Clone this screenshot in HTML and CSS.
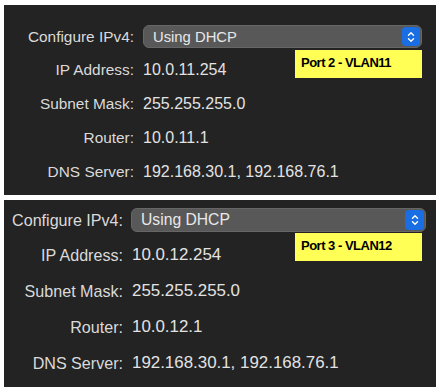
FILE: index.html
```html
<!DOCTYPE html>
<html lang="en">
  <head>
    <meta charset="UTF-8" />
    <meta name="viewport" content="width=device-width, initial-scale=1.0" />
    <title>TCP/IP settings</title>
    <link rel="stylesheet" href="styles.css">
  </head>
  <body>
    <div class="panel panel-a">
      <div class="row row-config">
        <span class="label">Configure IPv4:</span>
        <div class="popup">
          <span class="popup-text">Using DHCP</span>
          <span class="stepper">
            <svg width="8" height="12" viewBox="0 0 8 12">
              <path d="M1.5 4.2 L4 1.8 L6.5 4.2 M1.5 7.8 L4 10.2 L6.5 7.8" fill="none" stroke="#fff" stroke-width="1.4" stroke-linecap="round" stroke-linejoin="round"/>
            </svg>
          </span>
        </div>
      </div>
      <div class="row"><span class="label">IP Address:</span><span class="value">10.0.11.254</span></div>
      <div class="row"><span class="label">Subnet Mask:</span><span class="value">255.255.255.0</span></div>
      <div class="row"><span class="label">Router:</span><span class="value">10.0.11.1</span></div>
      <div class="row"><span class="label">DNS Server:</span><span class="value">192.168.30.1, 192.168.76.1</span></div>
      <div class="note">Port 2 - VLAN11</div>
    </div>

    <div class="panel panel-b">
      <div class="row row-config">
        <span class="label">Configure IPv4:</span>
        <div class="popup">
          <span class="popup-text">Using DHCP</span>
          <span class="stepper">
            <svg width="8" height="12" viewBox="0 0 8 12">
              <path d="M1.5 4.2 L4 1.8 L6.5 4.2 M1.5 7.8 L4 10.2 L6.5 7.8" fill="none" stroke="#fff" stroke-width="1.4" stroke-linecap="round" stroke-linejoin="round"/>
            </svg>
          </span>
        </div>
      </div>
      <div class="row"><span class="label">IP Address:</span><span class="value">10.0.12.254</span></div>
      <div class="row"><span class="label">Subnet Mask:</span><span class="value">255.255.255.0</span></div>
      <div class="row"><span class="label">Router:</span><span class="value">10.0.12.1</span></div>
      <div class="row"><span class="label">DNS Server:</span><span class="value">192.168.30.1, 192.168.76.1</span></div>
      <div class="note">Port 3 - VLAN12</div>
    </div>
  </body>
</html>
```

FILE: styles.css
```css
body {
  margin: 0;
  padding: 5px 6px 0 4px;
  background-color: #ffffff;
  font-family: "Liberation Sans", Arial, sans-serif;
  color: #dadada;
  display: flex;
  flex-direction: column;
  gap: 5px;
}
.panel {
  position: relative;
  box-sizing: border-box;
  background-color: #232323;
  display: flex;
  flex-direction: column;
}
.row {
  display: flex;
  align-items: center;
}
.label {
  flex: none;
  text-align: right;
  white-space: nowrap;
}
.value {
  color: #e2e2e2;
  white-space: nowrap;
}
.popup {
  flex: 1;
  display: flex;
  align-items: center;
  justify-content: space-between;
  background-color: #585858;
  border: 1px solid #666;
  border-radius: 6px;
  box-sizing: border-box;
  color: #e8e8e8;
}
.stepper {
  display: flex;
  align-items: center;
  justify-content: center;
  background-color: #1a6ee3;
  border-radius: 4px;
}
.note {
  position: absolute;
  left: 291px;
  width: 127px;
  height: 28px;
  box-sizing: border-box;
  padding: 5px 0 0 6px;
  background-color: #ffff55;
  color: #000;
  font-family: "Liberation Sans", sans-serif;
  font-weight: bold;
  font-size: 13px;
  letter-spacing: -0.5px;
}

/* top panel */
.panel-a {
  height: 190px;
  padding: 20px 14px 0 0;
  font-size: 15.4px;
}
.panel-a .label {
  width: 130px;
  margin-right: 9px;
}
.panel-a .value {
  font-size: 16px;
}
.panel-a .row {
  height: 34px;
}
.panel-a .row-config {
  height: 23px;
  margin-bottom: 5px;
}
.panel-a .popup {
  height: 23px;
  padding: 0 1px 0 9px;
  font-size: 14.8px;
}
.panel-a .stepper {
  width: 18px;
  height: 19px;
}
.panel-a .note {
  top: 45px;
}

/* bottom panel, captured a bit larger */
.panel-b {
  height: 187px;
  padding: 8px 10px 0 0;
  font-size: 16.1px;
}
.panel-b .label {
  width: 119px;
  margin-right: 8px;
}
.panel-b .value {
  margin-left: 1px;
  font-size: 16.9px;
}
.panel-b .row {
  height: 36px;
}
.panel-b .row-config {
  height: 24px;
  margin-bottom: 5px;
}
.panel-b .popup {
  height: 24px;
  padding: 0 1px 0 9px;
  font-size: 15.7px;
}
.panel-b .stepper {
  width: 19px;
  height: 20px;
}
.panel-b .note {
  top: 33px;
}
```
